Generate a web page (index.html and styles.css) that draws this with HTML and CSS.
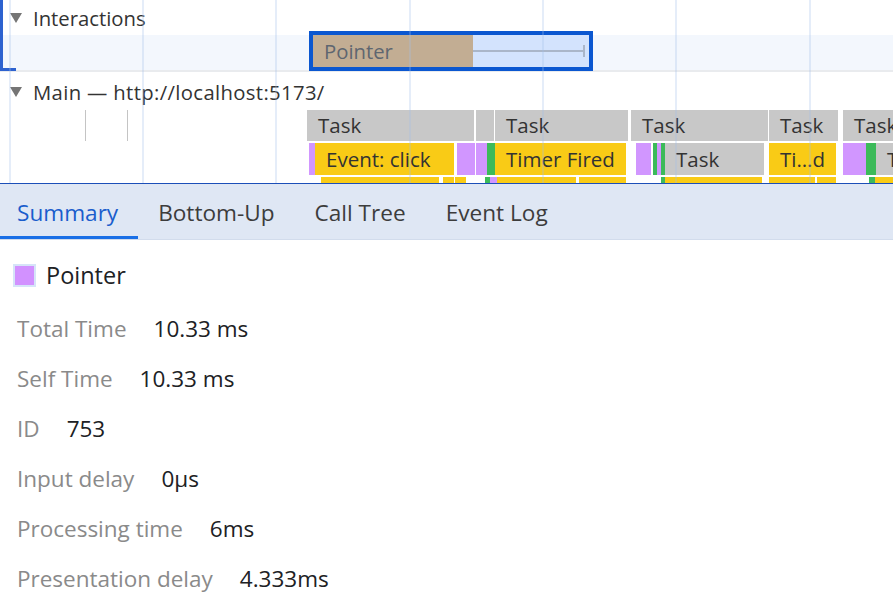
FILE: index.html
```html
<!DOCTYPE html>
<html lang="en">
<head>
<meta charset="utf-8">
<title>Performance</title>
<link rel="stylesheet" href="styles.css">
</head>
<body>
<div class="timeline">
  <div class="track-header">
    <svg class="tri" width="12" height="10" viewBox="0 0 12 10"><polygon points="0,0 12,0 6,10" fill="#757575"/></svg>
    <span>Interactions</span>
  </div>
  <div class="interactions-track"></div>
  <div class="track-header main-header">
    <svg class="tri" width="12" height="10" viewBox="0 0 12 10"><polygon points="0,0 12,0 6,10" fill="#757575"/></svg>
    <span>Main — http://localhost:5173/</span>
  </div>
  <div class="flame">
    <div class="row r1">
      <i class="tick" style="left:85px"></i>
      <i class="tick" style="left:127px"></i>
      <div class="b gray" style="left:307px;width:167px">Task</div>
      <div class="b gray" style="left:476px;width:18px"></div>
      <div class="b gray" style="left:495px;width:133px">Task</div>
      <div class="b gray" style="left:631px;width:137px">Task</div>
      <div class="b gray" style="left:769px;width:69px">Task</div>
      <div class="b gray" style="left:843px;width:60px">Task</div>
    </div>
    <div class="row r2">
      <div class="b purple" style="left:309px;width:1px"></div>
      <div class="b purple" style="left:311px;width:1px"></div>
      <div class="b yellow" style="left:315px;width:139px">Event: click</div>
      <div class="b purple" style="left:457px;width:5px"></div>
      <div class="b purple" style="left:464px;width:5px"></div>
      <div class="b purple" style="left:476px;width:1px"></div>
      <div class="b purple" style="left:481px;width:2px"></div>
      <div class="b green" style="left:487px;width:6px"></div>
      <div class="b yellow" style="left:495px;width:131px">Timer Fired</div>
      <div class="b purple" style="left:636px;width:15px"></div>
      <div class="b green" style="left:653px;width:3px"></div>
      <div class="b purple" style="left:657px;width:3px"></div>
      <div class="b green" style="left:661px;width:3px"></div>
      <div class="b gray" style="left:665px;width:99px">Task</div>
      <div class="b yellow" style="left:769px;width:67px">Ti…d</div>
      <div class="b purple" style="left:843px;width:9px"></div>
      <div class="b purple" style="left:854px;width:4px"></div>
      <div class="b purple" style="left:860px;width:2px"></div>
      <div class="b green" style="left:866px;width:1px"></div>
      <div class="b green" style="left:871px;width:3px"></div>
      <div class="b gray" style="left:876px;width:30px">T</div>
    </div>
    <div class="row r3">
      <div class="b yellow" style="left:321px;width:118px"></div>
      <div class="b yellow" style="left:443px;width:9px"></div>
      <div class="b yellow" style="left:455px;width:2px"></div>
      <div class="b green" style="left:485px;width:1px"></div>
      <div class="b purple" style="left:490px;width:1px"></div>
      <div class="b yellow" style="left:497px;width:79px"></div>
      <div class="b yellow" style="left:579px;width:47px"></div>
      <div class="b green" style="left:661px;width:1px"></div>
      <div class="b yellow" style="left:665px;width:97px"></div>
      <div class="b yellow" style="left:769px;width:46px"></div>
      <div class="b yellow" style="left:817px;width:19px"></div>
      <div class="b green" style="left:869px;width:1px"></div>
      <div class="b yellow" style="left:875px;width:30px"></div>
    </div>
  </div>

  <div class="bracket"></div>
  <div class="pointer-box">
    <div class="pointer-bar">Pointer</div>
    <div class="whisker"></div>
  </div>
  <div class="grid">
    <i style="left:9px"></i>
    <i style="left:142px"></i>
    <i style="left:275px"></i>
    <i style="left:409px"></i>
    <i style="left:542px"></i>
    <i style="left:675px"></i>
    <i style="left:809px"></i>
  </div>
</div>

<div class="tabs">
  <div class="tab active">Summary</div>
  <div class="tab">Bottom-Up</div>
  <div class="tab">Call Tree</div>
  <div class="tab">Event Log</div>
</div>

<div class="details">
  <div class="title">
    <span class="swatch"></span>
    <span>Pointer</span>
  </div>
  <div class="field"><span class="label">Total Time</span><span class="value">10.33 ms</span></div>
  <div class="field"><span class="label">Self Time</span><span class="value">10.33 ms</span></div>
  <div class="field"><span class="label">ID</span><span class="value">753</span></div>
  <div class="field"><span class="label">Input delay</span><span class="value">0µs</span></div>
  <div class="field"><span class="label">Processing time</span><span class="value">6ms</span></div>
  <div class="field"><span class="label">Presentation delay</span><span class="value">4.333ms</span></div>
</div>
</body>
</html>
```

FILE: styles.css
```css
* { box-sizing: border-box; }
html, body {
  margin: 0;
  padding: 0;
  background: #fff;
  overflow: hidden;
}
body {
  font-family: "Open Sans", "Noto Sans", sans-serif;
  color: #333;
  width: 893px;
  height: 610px;
}

.timeline {
  position: relative;
  height: 184px;
  border-bottom: 1px solid #1c4fb8;
  overflow: hidden;
}

.track-header {
  height: 35px;
  display: flex;
  align-items: center;
  gap: 11px;
  padding-left: 10px;
  font-size: 20.3px;
  color: #333;
}
.track-header .tri { flex: none; }
.main-header {
  height: 38px;
  padding-top: 2px;
  letter-spacing: 0.35px;
}

.interactions-track {
  height: 37px;
  background: #f3f7fd;
  border-bottom: 2px solid #e9ebee;
}

.flame {
  position: relative;
  height: 73px;
}
.row {
  position: absolute;
  left: 0;
  right: 0;
}
.r1 { top: 0; height: 31px; }
.r2 { top: 33px; height: 32px; }
.r3 { top: 67px; height: 10px; }

.b {
  position: absolute;
  top: 0;
  bottom: 0;
  padding-left: 11px;
  font-size: 20.5px;
  line-height: 31px;
  color: #333;
  white-space: nowrap;
  overflow: hidden;
}
.gray { background: #c8c8c8; }
.yellow { background: #f9cb16; }
.purple { background: #d196ff; }
.green { background: #3cba5a; }
.r2 .b { line-height: 32px; }

.tick {
  position: absolute;
  top: 0;
  bottom: 0;
  width: 1px;
  background: #c4c4c4;
}

.bracket {
  position: absolute;
  left: 0;
  top: -4px;
  width: 16px;
  height: 75px;
  border-left: 3px solid #2d62cf;
  border-bottom: 3px solid #2d62cf;
}

.pointer-box {
  position: absolute;
  left: 309px;
  top: 31px;
  width: 284px;
  height: 40px;
  border: 4px solid #0b57d0;
  background: #d3e3fd;
}
.pointer-bar {
  position: absolute;
  left: 0;
  top: 0;
  bottom: 0;
  width: 160px;
  background: #c2ad93;
  padding-left: 11px;
  font-size: 20.3px;
  line-height: 32px;
  color: #5e6670;
}
.whisker {
  position: absolute;
  left: 160px;
  right: 6px;
  top: 15px;
  height: 2px;
  background: #aab6c9;
}
.whisker::after {
  content: "";
  position: absolute;
  right: -2px;
  top: -5px;
  width: 2px;
  height: 12px;
  background: #aab6c9;
}

.grid {
  position: absolute;
  inset: 0;
  pointer-events: none;
}
.grid i {
  position: absolute;
  top: 0;
  bottom: 0;
  width: 2px;
  background: rgba(160, 190, 235, 0.28);
}

.tabs {
  display: flex;
  height: 56px;
  background: #dfe7f4;
  border-bottom: 1px solid #d2dcec;
}
.tab {
  padding: 4px 20px 0 20px;
  display: flex;
  align-items: center;
  font-size: 22.6px;
  color: #3c3c3c;
  border-bottom: 3px solid transparent;
}
.tab:first-child { padding-left: 17px; }
.tab.active {
  color: #1a5dcc;
  border-bottom-color: #1a6fe6;
}

.details {
  padding: 18px 0 0 17px;
}
.title {
  display: flex;
  align-items: center;
  gap: 10px;
  height: 34px;
  margin-left: -4px;
  font-size: 23.5px;
  color: #202124;
  margin-bottom: 11px;
}
.swatch {
  width: 23px;
  height: 23px;
  background: #d291ff;
  border: 2px solid #d6e4f8;
}
.field {
  display: flex;
  align-items: center;
  height: 50px;
  font-size: 22.5px;
}
.label {
  color: #8a8a8a;
  margin-right: 27px;
}
.value {
  color: #202124;
}
```
